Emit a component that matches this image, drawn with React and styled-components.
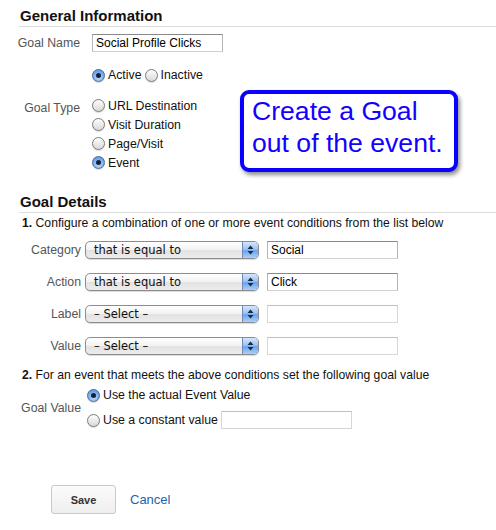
import * as React from "react";
import styled, { createGlobalStyle, css } from "styled-components";

const GlobalStyle = createGlobalStyle`
  html, body {
    margin: 0;
    padding: 0;
    background: #fff;
  }
  body {
    font-family: "Liberation Sans", Arial, Helvetica, sans-serif;
    font-size: 12px;
    color: #000;
  }
`;

const Page = styled.div`
  position: relative;
  width: 496px;
  height: 530px;
  overflow: hidden;
`;

const SectionHeading = styled.h2`
  margin: ${(p) => p.$top}px 0 0 19px;
  padding: 0 0 1px 1px;
  font-size: 15px;
  line-height: 18px;
  font-weight: bold;
  color: #111;
  border-bottom: 1px solid #dcdcdc;
`;

const FieldRow = styled.div`
  display: grid;
  grid-template-columns: ${(p) => p.$labelWidth || 80}px auto;
  column-gap: ${(p) => p.$gap || 12}px;
  align-items: ${(p) => p.$align || "center"};
  margin-top: ${(p) => p.$top || 0}px;
`;

const FieldLabel = styled.label`
  text-align: right;
  font-size: 12.3px;
  line-height: 18px;
  color: #555;
  margin-top: ${(p) => p.$top || 0}px;
`;

const TextInput = styled.div`
  box-sizing: border-box;
  width: ${(p) => p.$width}px;
  height: 18px;
  padding: 0 3px;
  font-size: 12px;
  line-height: 16px;
  color: #000;
  background: #fff;
  border: 1px solid #b5b5b5;
  border-top-color: #8a8a8a;
  border-bottom-color: #d0d0d0;
  ${(p) =>
    p.$empty &&
    css`
      border-color: #d6d6d6;
      border-top-color: #c0c0c0;
    `}
`;

const RadioStack = styled.div`
  display: flex;
  flex-direction: ${(p) => (p.$inline ? "row" : "column")};
  gap: ${(p) => p.$gap || 0}px;
`;

const RadioOption = styled.div`
  display: flex;
  align-items: center;
  gap: 3px;
  height: ${(p) => p.$height || 19}px;
  font-size: 12.3px;
  color: #111;
`;

const RadioDot = styled.span`
  box-sizing: border-box;
  position: relative;
  flex: none;
  width: 13px;
  height: 13px;
  border-radius: 50%;
  border: 1px solid #7b7b7b;
  background: linear-gradient(#fdfdfd, #d9d9d9);
  box-shadow: 0 1px 1px rgba(0, 0, 0, 0.15);
  ${(p) =>
    p.$checked &&
    css`
      border-color: #4a6a98;
      background: radial-gradient(circle at 50% 70%, #c3defa 0%, #78adef 55%, #4b86d6 100%);
      &::after {
        content: "";
        position: absolute;
        left: 3px;
        top: 3px;
        width: 5px;
        height: 5px;
        border-radius: 50%;
        background: #15213a;
      }
    `}
`;

const Callout = styled.div`
  position: absolute;
  left: 240px;
  top: 90px;
  box-sizing: border-box;
  width: 218px;
  height: 82px;
  padding: 1px 4px 0 8px;
  border: 4px solid #0a00ff;
  border-radius: 9px;
  background: #fff;
  box-shadow: 2px 3px 4px rgba(0, 0, 0, 0.45);
  color: #1400ff;
  font-size: 26.6px;
  line-height: 32px;
  white-space: nowrap;
`;

const StepText = styled.p`
  margin: ${(p) => p.$top}px 0 0 22px;
  font-size: 12.2px;
  line-height: 16px;
  color: #111;

  b {
    font-weight: bold;
  }
`;

const ConditionList = styled.div`
  display: flex;
  flex-direction: column;
  gap: 14px;
  margin-top: 10px;
`;

const ConditionRow = styled.div`
  display: grid;
  grid-template-columns: 81px 174px 131px;
  column-gap: 4px;
  align-items: center;

  & > :last-child {
    margin-left: 4px;
  }
`;

const Select = styled.div`
  box-sizing: border-box;
  display: flex;
  height: 18px;
  border: 1px solid #8c8c8c;
  border-radius: 5px;
  overflow: hidden;
  background: linear-gradient(#ffffff 0%, #f1f1f1 50%, #e2e2e2 51%, #ececec 100%);
  box-shadow: 0 1px 1px rgba(0, 0, 0, 0.15);
`;

const SelectText = styled.span`
  flex: 1;
  padding-left: 8px;
  font-family: "DejaVu Sans", "Liberation Sans", sans-serif;
  font-size: 11.5px;
  line-height: 16px;
  color: #111;
`;

const SelectArrow = styled.span`
  flex: none;
  width: 15px;
  border-left: 1px solid #6d8ab8;
  background: linear-gradient(#d3e6fb 0%, #9ac4f3 45%, #6aa4ea 55%, #a9d1fb 100%);
  display: flex;
  align-items: center;
  justify-content: center;
`;

const GoalValueRow = styled.div`
  display: grid;
  grid-template-columns: 81px auto;
  column-gap: 6px;
  align-items: center;
  margin-top: 3px;
`;

const ValueOptions = styled.div`
  display: flex;
  flex-direction: column;
  gap: 7px;
`;

const Actions = styled.div`
  display: flex;
  align-items: center;
  gap: 14px;
  margin: 56px 0 0 51px;
`;

const SaveButton = styled.button`
  box-sizing: border-box;
  width: 65px;
  height: 29px;
  border: 1px solid #c9c9c9;
  border-radius: 3px;
  background: linear-gradient(#fbfbfb, #efefef);
  font-family: "Liberation Sans", Arial, sans-serif;
  font-size: 11px;
  font-weight: bold;
  color: #333;
  padding: 0;
`;

const CancelLink = styled.a`
  font-size: 13px;
  color: #1c63b0;
  text-decoration: none;
`;

function Radio({ checked, children, height }) {
  return (
    <RadioOption $height={height}>
      <RadioDot $checked={checked} />
      <span>{children}</span>
    </RadioOption>
  );
}

function Dropdown({ value }) {
  return (
    <Select>
      <SelectText>{value}</SelectText>
      <SelectArrow>
        <svg width="7" height="10" viewBox="0 0 7 10">
          <path d="M3.5 0.5 L6.5 4 L0.5 4 Z" fill="#1b2a44" />
          <path d="M3.5 9.5 L6.5 6 L0.5 6 Z" fill="#1b2a44" />
        </svg>
      </SelectArrow>
    </Select>
  );
}

const conditions = [
  { label: "Category", op: "that is equal to", value: "Social" },
  { label: "Action", op: "that is equal to", value: "Click" },
  { label: "Label", op: "– Select –", value: "" },
  { label: "Value", op: "– Select –", value: "" },
];

export default function App() {
  return (
    <Page>
      <GlobalStyle />
      <SectionHeading $top={7}>General Information</SectionHeading>

      <FieldRow $top={7}>
        <FieldLabel>Goal Name</FieldLabel>
        <TextInput $width={131}>Social Profile Clicks</TextInput>
      </FieldRow>

      <FieldRow $top={14}>
        <span />
        <RadioStack $inline $gap={3}>
          <Radio checked height={18}>Active</Radio>
          <Radio height={18}>Inactive</Radio>
        </RadioStack>
      </FieldRow>

      <FieldRow $top={12} $align="start">
        <FieldLabel $top={3}>Goal Type</FieldLabel>
        <RadioStack>
          <Radio>URL Destination</Radio>
          <Radio>Visit Duration</Radio>
          <Radio>Page/Visit</Radio>
          <Radio checked>Event</Radio>
        </RadioStack>
      </FieldRow>

      <Callout>
        Create a Goal
        <br />
        out of the event.
      </Callout>

      <SectionHeading $top={21}>Goal Details</SectionHeading>

      <StepText $top={2}>
        <b>1.</b> Configure a combination of one or more event conditions from the list below
      </StepText>

      <ConditionList>
        {conditions.map((c) => (
          <ConditionRow key={c.label}>
            <FieldLabel>{c.label}</FieldLabel>
            <Dropdown value={c.op} />
            <TextInput $width={131} $empty={!c.value}>
              {c.value}
            </TextInput>
          </ConditionRow>
        ))}
      </ConditionList>

      <StepText $top={12}>
        <b>2.</b> For an event that meets the above conditions set the following goal value
      </StepText>

      <GoalValueRow>
        <FieldLabel>Goal Value</FieldLabel>
        <ValueOptions>
          <Radio checked height={18}>Use the actual Event Value</Radio>
          <RadioOption $height={18}>
            <RadioDot />
            <span>Use a constant value</span>
            <TextInput $width={131} $empty />
          </RadioOption>
        </ValueOptions>
      </GoalValueRow>

      <Actions>
        <SaveButton>Save</SaveButton>
        <CancelLink href="#">Cancel</CancelLink>
      </Actions>
    </Page>
  );
}
